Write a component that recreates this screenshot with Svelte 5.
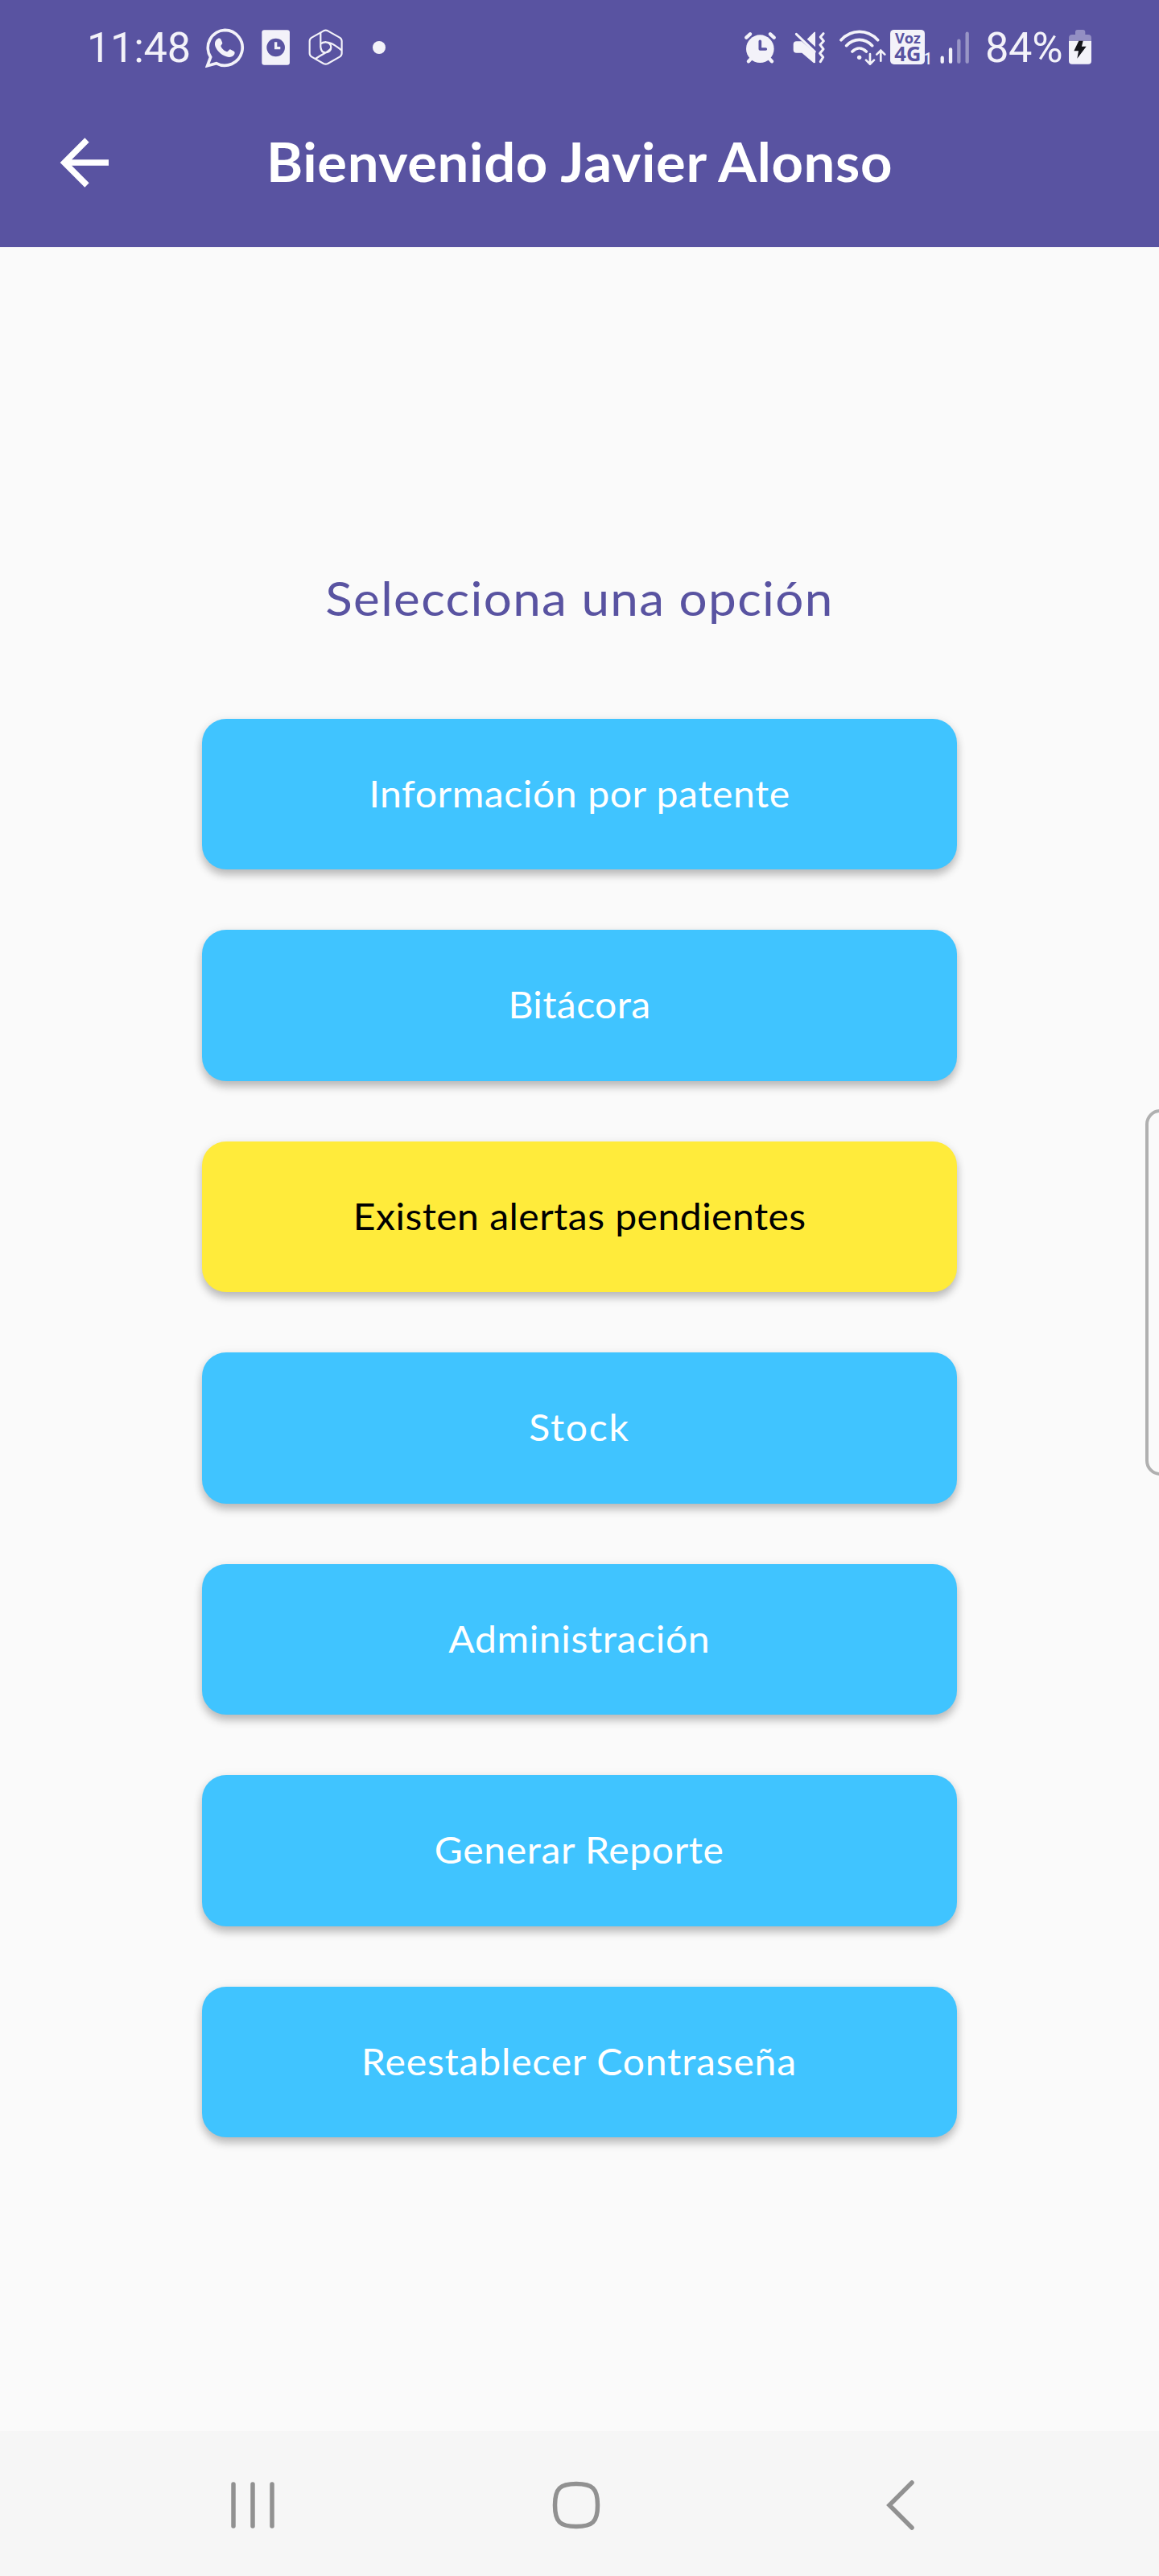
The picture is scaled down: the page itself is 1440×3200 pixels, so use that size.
<script>
  const options = [
    { label: 'Información por patente', spacing: 0.57 },
    { label: 'Bitácora', spacing: 0.35 },
    { label: 'Existen alertas pendientes', spacing: 0.44, alert: true },
    { label: 'Stock', spacing: 1.7 },
    { label: 'Administración', spacing: 0.62 },
    { label: 'Generar Reporte', spacing: 0.6 },
    { label: 'Reestablecer Contraseña', spacing: 0.78 },
  ];
</script>

<div class="screen">
  <header>
    <div class="status">
      <span class="time">11:48</span>
      <svg class="whatsapp" viewBox="525 75 147 147"><path d="M598 82a66 66 0 1 1-32 124l-33 9 12-32A66 66 0 0 1 598 82z" fill="none" stroke="#f3f2f9" stroke-width="11" /><path d="M572 114c5-3 10-1 12 4l5 12c1 4-6 8-6 12 3 9 13 18 23 21 5 0 8-10 12-9l14 7c5 3 3 9 0 14-6 8-18 10-28 6-22-7-40-27-43-44-1-11 3-19 11-23z" fill="#f3f2f9" /></svg>
      <svg class="outlook" viewBox="734 82 106 132"><rect x="735" y="83" width="104" height="130" rx="9" fill="#f3f2f9" /><circle cx="787" cy="148" r="34" fill="#5953a1" /><path d="M787 128v22h17" fill="none" stroke="#f3f2f9" stroke-width="10" /></svg>
      <svg class="hex" viewBox="911 79 130 136"><g fill="none" stroke="#f3f2f9" stroke-width="6.5" stroke-linejoin="round"><path d="M968 86q8-4 16 0l44 25q8 5 8 13v46q0 8-8 13l-44 25q-8 4-16 0l-44-25q-8-5-8-13v-46q0-8 8-13z" /><path d="M957 92v54c1 14 9 21 19 21 12 0 20-8 20-19 0-12-9-20-20-20-8 0-13 2-17 6M962 130c24-8 46 7 73 28M996 147c0 14-34 26-58 43M957 146c2 14 8 20 17 23" /></g></svg>
      <i class="dot"></i>
      <svg class="alarm" viewBox="74 88 117 121"><g stroke="#f3f2f9" stroke-width="13" stroke-linecap="round"><path d="M81 111l14-13M184 111l-14-13M100 188l-11 12M165 188l11 12" /></g><circle cx="132" cy="153" r="52" fill="#f3f2f9" /><path d="M132 125v29h21" fill="none" stroke="#5953a1" stroke-width="11" stroke-linecap="round" stroke-linejoin="round" /></svg>
      <svg class="mute" viewBox="253 88 122 121"><g fill="#f3f2f9"><path d="M267 125h19l51 44v36l-6 1-44-38h-20q-12 0-12-12v-19q0-12 12-12z" /><path d="M306 117l27-27h4v56z" /></g><path d="M266 98l69 66" stroke="#f3f2f9" stroke-width="9" stroke-linecap="round" /><path d="M366 96l-11 13 12 15-13 14 12 16-13 16 12 14-10 17" transform="translate(1 0)" fill="none" stroke="#f3f2f9" stroke-width="9" stroke-linecap="round" stroke-linejoin="round" /></svg>
      <svg class="wifi" viewBox="428 80 175 134"><g fill="none" stroke="#f3f2f9" stroke-width="11" stroke-linecap="round"><path d="M434 118c39-41 98-41 137 0M454 139c28-29 68-29 96 0M476 161c16-16 36-16 52 0" /><path d="M542 170v36M527 193l15 15 15-15M582 196v-36M567 172l15-15 15 15" stroke-width="8" /></g><circle cx="502" cy="183" r="8" fill="#f3f2f9" /></svg>
      <svg class="volte" viewBox="618 84 152 130"><rect x="618" y="84" width="129" height="129" rx="14" fill="#f3f2f9" /><g fill="#5953a1" font-family="Open Sans" font-weight="700"><text x="636" y="136" font-size="54" textLength="96" lengthAdjust="spacingAndGlyphs">Voz</text><text x="634" y="200" font-size="75" textLength="99" lengthAdjust="spacingAndGlyphs">4G</text></g><text x="744" y="212" font-size="61" font-family="Roboto" font-weight="500" textLength="30" lengthAdjust="spacingAndGlyphs" fill="#f3f2f9">1</text></svg>
      <svg class="signal" viewBox="805 87 110 121"><g stroke="#f3f2f9" stroke-width="13" stroke-linecap="round"><path d="M813 185v15M844 154v46" /><path opacity=".42" d="M875 122v78M906 95v105" /></g></svg>
      <span class="pct">84%</span>
      <svg class="battery" viewBox="1284 81 84 130"><path d="M1284 125v-14q0-12 12-12h12v-10q0-8 8-8h21q8 0 8 8v10h11q12 0 12 12v14z" fill="#938fc3" /><path d="M1284 123h84v74q0 12-12 12h-60q-12 0-12-12z" fill="#f3f2f9" /><path d="M1321 122h16l-5 21h17l-34 45 5-28h-17z" fill="#15151c" /></svg>
    </div>
    <div class="appbar">
      <svg class="arrow" viewBox="0 0 62 62"><path d="M61 31H7M34 3L6 31l28 28" fill="none" stroke="#fff" stroke-width="7.5" /></svg>
      <h1>Bienvenido Javier Alonso</h1>
    </div>
  </header>

  <main>
    <h2>Selecciona una opción</h2>
    <div class="options">
      {#each options as o}
        <button class:alert={o.alert}><span class="label" style="letter-spacing: {o.spacing}px">{o.label}</span></button>
      {/each}
    </div>
    <aside class="edge"></aside>
  </main>

  <nav>
    <svg class="recents" viewBox="0 0 54 64"><path d="M3 6v52M27 6v52M51 6v52" /></svg>
    <svg class="home" viewBox="0 0 60 64"><path d="M30 5.500C50 5.500 56.500 11 56.500 32S50 58.500 30 58.500 3.500 53 3.500 32 10 5.500 30 5.500z" /></svg>
    <svg class="back" viewBox="0 0 36 64"><path d="M32 4L4 32l28 28" /></svg>
  </nav>
</div>

<style>
  :global(body) { margin: 0; background: #fafafa; }
  .screen { width: 1440px; height: 3200px; display: flex; flex-direction: column; background: #fafafa; font-family: Lato, sans-serif; overflow: hidden; }
  header { height: 307px; background: #5953a1; color: #fff; }
  svg { display: block; flex: none; }
  .status { height: 118px; box-sizing: border-box; padding-left: 108px; display: flex; align-items: center; color: #f3f2f9; font-family: Roboto, sans-serif; }
  .time, .pct { font-size: 52.300px; line-height: 60px; letter-spacing: -0.300px; }
  .time { width: 147px; }
  .whatsapp { width: 49px; height: 49px; }
  .outlook { width: 35.300px; height: 44px; margin-left: 20.500px; }
  .hex { width: 43.300px; height: 45.300px; margin-left: 23.500px; }
  .dot { width: 16px; height: 16px; border-radius: 50%; background: #f3f2f9; margin-left: 36px; }
  .alarm { width: 39px; height: 40.300px; margin-left: auto; }
  .mute { width: 40.700px; height: 40.300px; margin-left: 20.500px; }
  .wifi { width: 58.300px; height: 44.700px; margin-left: 17.500px; }
  .volte { width: 50.700px; height: 43.300px; margin-left: 5px; overflow: visible; }
  .signal { width: 36.700px; height: 40.300px; margin-left: 11.500px; }
  .pct { margin-left: 19px; width: 104px; }
  .battery { width: 28px; height: 43.300px; margin-right: 84px; }
  .appbar { height: 168px; display: grid; grid-template-columns: 62px 1fr 62px; align-items: center; padding: 0 74px; }
  .arrow { width: 62px; height: 62px; }
  h1 { margin: 0; padding-bottom: 5px; text-align: center; font-size: 67.500px; line-height: 80px; font-weight: 700; letter-spacing: 0.600px; transform: scaleX(1.02); white-space: nowrap; }
  main { flex: 1; position: relative; }
  h2 { margin: 0; padding-top: 395px; text-align: center; color: #5953a1; font-size: 58.500px; line-height: 80px; font-weight: 400; letter-spacing: 1.250px; transform: scaleX(1.06); }
  .options { display: flex; flex-direction: column; align-items: center; gap: 75px; padding-top: 110.500px; }
  button { width: 937.500px; height: 187.500px; border: 0; padding: 0 0 3px; border-radius: 30px; background: #40c4ff; color: #fff; font: 400 46.700px/60px Lato, sans-serif; box-shadow: 0 7px 11px rgba(0, 0, 0, .24), 0 1px 14px rgba(0, 0, 0, .06); }
  .label { display: inline-block; transform: scaleX(1.03); }
  .alert { background: #ffeb3b; color: #000; }
  .edge { position: absolute; right: -20px; top: 1071px; width: 29px; height: 447px; border: 4px solid #b0b0b0; border-radius: 20px; }
  nav { height: 180px; box-sizing: border-box; padding: 3px 0 0 287px; background: #f6f6f6; display: flex; align-items: center; }
  nav path { fill: none; stroke: #919191; stroke-width: 5.500; stroke-linecap: round; }
  .recents { width: 54px; height: 64px; }
  .home { width: 60px; height: 64px; margin-left: 345px; }
  .back { width: 36px; height: 64px; margin-left: 355px; }
</style>
